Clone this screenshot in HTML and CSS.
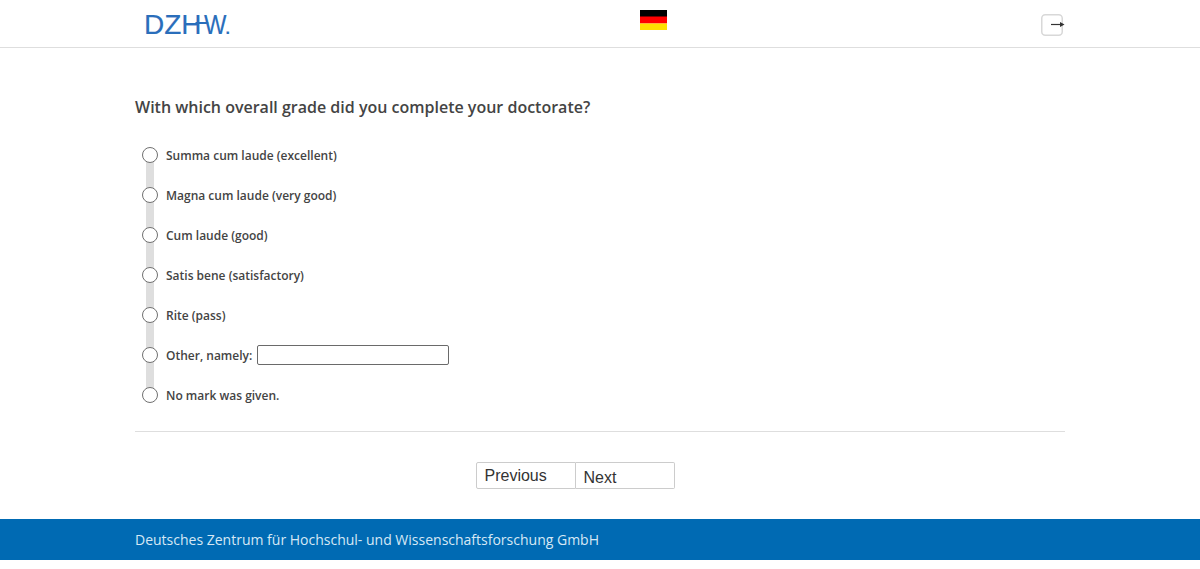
FILE: index.html
```html
<!DOCTYPE html>
<html lang="en">
<head>
<meta charset="utf-8">
<title>Survey</title>
<link rel="stylesheet" href="styles.css">
</head>
<body>
<header class="header">
  <div class="container header-inner">
    <div class="logo"><span class="logo-text">DZH</span><span class="logo-w">W</span><span class="logo-dot">.</span></div>
    <svg class="flag" width="27" height="20" viewBox="0 0 27 20" aria-label="Deutsch"><rect width="27" height="7" fill="#000"/><rect y="6.5" width="27" height="7" fill="#f00"/><rect y="13.5" width="27" height="6.5" fill="#ffdf00"/></svg>
    <svg class="exit" width="25" height="24" viewBox="0 0 25 24" aria-label="Exit"><rect x="1.75" y="2.75" width="20.5" height="20.5" rx="3.5" fill="#fff" stroke="#d8d8d8" stroke-width="1.5"/><path d="M11 12.5h11" stroke="#333" stroke-width="1.2"/><path d="M20 10l4.5 2.5-4.5 2.5z" fill="#333"/></svg>
  </div>
</header>
<main class="container main">
  <h1 class="question">With which overall grade did you complete your doctorate?</h1>
  <ul class="options">
    <li class="option"><span class="radio"></span><label>Summa cum laude (excellent)</label></li>
    <li class="option"><span class="radio"></span><label>Magna cum laude (very good)</label></li>
    <li class="option"><span class="radio"></span><label>Cum laude (good)</label></li>
    <li class="option"><span class="radio"></span><label>Satis bene (satisfactory)</label></li>
    <li class="option"><span class="radio"></span><label>Rite (pass)</label></li>
    <li class="option"><span class="radio"></span><label>Other, namely:</label><input class="other" type="text"></li>
    <li class="option"><span class="radio"></span><label>No mark was given.</label></li>
  </ul>
  <hr class="rule">
  <nav class="pager">
    <button class="btn btn-prev" type="button">Previous</button><button class="btn btn-next" type="button">Next</button>
  </nav>
</main>
<footer class="footer">
  <div class="container footer-text">Deutsches Zentrum für Hochschul- und Wissenschaftsforschung GmbH</div>
</footer>
</body>
</html>
```
FILE: styles.css
```css
* { box-sizing: border-box; }
html, body { margin: 0; padding: 0; background: #fff; }
body { font-family: "Open Sans", sans-serif; color: #444; }
.container { width: 930px; margin: 0 auto; }

.header { height: 48px; border-bottom: 1px solid #dedede; }
.header-inner { display: grid; grid-template-columns: 505px auto 1fr; align-items: start; height: 47px; }
.logo { margin: 8px 0 0 9px; height: 32px; display: flex; align-items: baseline; font-family: "Liberation Sans", sans-serif; font-size: 28px; line-height: 34px; color: #2a6ebb; -webkit-text-stroke: 0.15px #2a6ebb; position: relative; }
.logo-w { display: block; width: 22px; margin-left: 2px; transform: scaleX(0.85); transform-origin: left center; position: relative; }
.logo-w::before { content: ""; position: absolute; left: -10px; top: 14px; width: 15px; height: 2px; background: #2a6ebb; }
.logo-dot { font-size: 16px; margin-left: 0; font-weight: 700; }
.flag { margin-top: 10px; display: block; }
.exit { justify-self: end; margin-top: 12px; display: block; }

.main { display: block; }
.question { margin: 48px 0 0; font-size: 16px; line-height: 22px; font-weight: 600; color: #444; }
.options { list-style: none; margin: 17px 0 0; padding: 0 0 0 7px; position: relative; }
.options::before { content: ""; position: absolute; left: 11px; top: 20px; bottom: 20px; width: 8px; background: #dedede; }
.option { height: 40px; display: flex; align-items: center; position: relative; font-size: 12px; font-weight: 600; }
.radio { width: 16px; height: 16px; border-radius: 50%; border: 1px solid #707070; background: #fff; flex: none; margin-right: 8px; }
.other { width: 192px; height: 20px; margin: 0 0 0 5px; padding: 0 4px; border: 1px solid #6a6a6a; border-radius: 2px; background: #fff; }
.rule { margin: 16px 0 0; border: 0; border-top: 1px solid #dedede; }
.pager { display: flex; justify-content: center; align-items: flex-start; margin-top: 30px; height: 27px; padding-right: 49px; }
.btn { height: 27px; padding: 0 7.5px; font-family: "Liberation Sans", sans-serif; font-size: 16px; color: #333; background: #fff; border: 1px solid #ccc; text-align: left; }
.btn-prev { width: 100px; border-radius: 2px 0 0 2px; }
.btn-next { width: 99px; border-left: 0; border-radius: 0 2px 2px 0; padding-top: 4px; }
.footer { margin-top: 30px; height: 41px; background: #006ab3; }
.footer-text { color: #d6e8f5; font-size: 14px; line-height: 41px; }
```
